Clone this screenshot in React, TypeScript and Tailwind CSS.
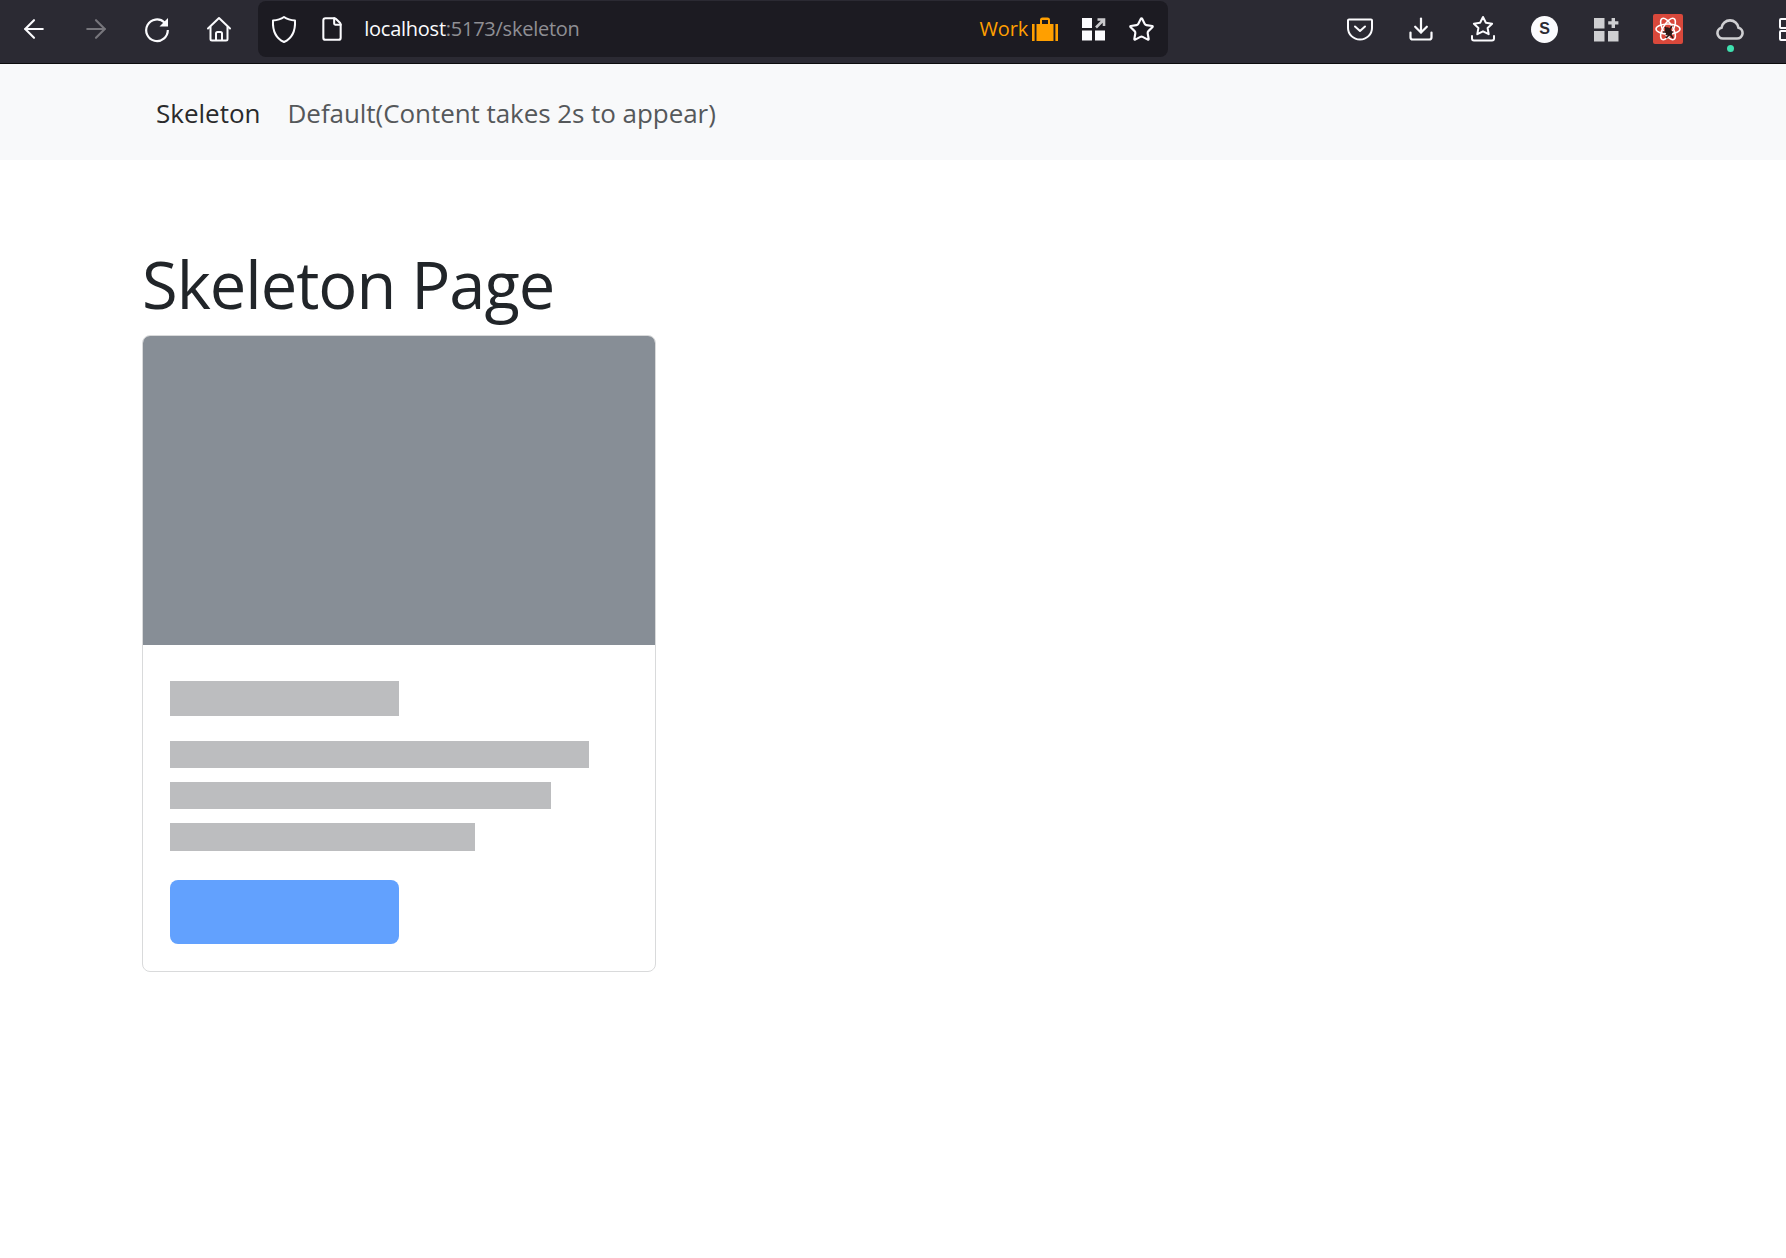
import React from 'react';
import { ArrowLeft, ArrowRight, File, Star, Download } from 'lucide-react';

const ToolButton = ({ children }: { children: React.ReactNode }) => (
    <div className="w-[61.7px] h-[58px] shrink-0 flex items-center justify-center">{children}</div>
);

const ReloadIcon = () => (
    <svg width="28" height="28" viewBox="0 0 28 28" fill="none" stroke="#fbfbfe" strokeWidth="2.200">
        <path d="M21.500 7.500A10.800 10.800 0 1 0 24.800 15" />
        <path d="M25 3v8.500h-8.500z" fill="#fbfbfe" stroke="none" />
    </svg>
);

const HomeIcon = () => (
    <svg width="28" height="28" viewBox="0 0 28 28" fill="none" stroke="#fbfbfe" strokeWidth="2" strokeLinecap="round" strokeLinejoin="round">
        <path d="M3 13.500L14 3l11 10.500" />
        <path d="M5.500 12v12a1.500 1.500 0 0 0 1.500 1.500h14a1.500 1.500 0 0 0 1.500-1.500V12" />
        <path d="M11 25v-6.500a1.500 1.500 0 0 1 1.500-1.500h3a1.500 1.500 0 0 1 1.500 1.500V25" />
    </svg>
);

const ShieldIcon = () => (
    <svg width="26" height="29" viewBox="0 0 26 29" fill="none" stroke="#fbfbfe" strokeWidth="2" strokeLinejoin="round">
        <path d="M13 2c3 2.200 6.500 3.300 11 3.500.5 10-2 17.500-11 21.500C4 23 1.500 15.500 2 5.500 6.500 5.300 10 4.200 13 2z" />
    </svg>
);

const PocketIcon = () => (
    <svg width="26" height="24" viewBox="0 0 26 24" fill="none" stroke="#fbfbfe" strokeWidth="2">
        <path d="M2 2.500h22a1 1 0 0 1 1 1V11a12 11.500 0 0 1-24 0V3.500a1 1 0 0 1 1-1z" />
        <path d="M8 9.500l5 4.500 5-4.500" strokeLinecap="round" strokeLinejoin="round" />
    </svg>
);

const StarTrayIcon = () => (
    <svg width="26" height="28" viewBox="0 0 26 28" fill="none" stroke="#fbfbfe" strokeWidth="2" strokeLinejoin="round" strokeLinecap="round">
        <path d="M13 2l2.900 5.800 6.200.9-4.500 4.300 1.100 6.200L13 16.300 7.300 19.200 8.400 13 3.900 8.700l6.200-.9z" />
        <path d="M2 21v2.500a2 2 0 0 0 2 2h18a2 2 0 0 0 2-2V21" />
    </svg>
);

const GridArrowIcon = () => (
    <svg width="24" height="24" viewBox="0 0 24 24">
        <rect x="0" y="1" width="10" height="10" fill="#fbfbfe" />
        <rect x="0" y="13.500" width="10" height="10" fill="#fbfbfe" />
        <rect x="13" y="13.500" width="10" height="10" fill="#fbfbfe" />
        <path d="M14 10.500l7-7M15.500 2.500h6.500V9" stroke="#c9c9cc" strokeWidth="2.600" fill="none" />
    </svg>
);

const GridPlusIcon = () => (
    <svg width="25" height="25" viewBox="0 0 25 25" fill="#cfcfd2">
        <rect x="0" y="1" width="10.500" height="10.500" />
        <rect x="0" y="14" width="10.500" height="10.500" />
        <rect x="14" y="14" width="10.500" height="10.500" />
        <path d="M17.600 1H21v3.200h3.400v3.400H21V11h-3.400V7.600h-3.400V4.200h3.400z" />
    </svg>
);

const OverflowIcon = () => (
    <svg width="25" height="25" viewBox="0 0 25 25" fill="none" stroke="#fbfbfe" strokeWidth="2">
        <rect x="1" y="2" width="9" height="9" rx="1" />
        <rect x="1" y="14" width="9" height="9" rx="1" />
        <rect x="14" y="2" width="9" height="9" rx="1" />
        <rect x="14" y="14" width="9" height="9" rx="1" />
    </svg>
);

const BriefcaseIcon = () => (
    <svg width="26" height="24" viewBox="0 0 26 24" fill="#ff9f00">
        <path d="M0 7h2.600v17H0zM23.400 7H26v17h-2.600zM4.500 7H8V3a2.500 2.500 0 0 1 2.500-2.500h5A2.500 2.500 0 0 1 18 3v4h3.500v17h-17zM10 3v4h6V3z" fillRule="evenodd" />
    </svg>
);

const ReactBugIcon = () => (
    <svg width="30" height="30" viewBox="0 0 30 30">
        <rect width="30" height="30" rx="2" fill="#d9483b" />
        <g fill="none" stroke="#fff" strokeWidth="1.500">
            <ellipse cx="15" cy="15" rx="12" ry="5" />
            <ellipse cx="15" cy="15" rx="12" ry="5" transform="rotate(60 15 15)" />
            <ellipse cx="15" cy="15" rx="12" ry="5" transform="rotate(120 15 15)" />
        </g>
        <g stroke="#2b1a18" strokeWidth="1.600" fill="none">
            <path d="M12 13l6 8M19 12l-6 9M10 18h10M13 24l4-4M20 24l-3-4" />
        </g>
        <ellipse cx="15.500" cy="17.500" rx="3" ry="4.500" fill="#2b1a18" transform="rotate(-30 15.500 17.500)" />
    </svg>
);

const CloudIcon = () => (
    <div className="relative w-[28px] h-[24px]">
        <svg width="28" height="24" viewBox="0 0 28 24" fill="none" stroke="#cfcfd2" strokeWidth="2.600">
            <path d="M7 21.500h14a5.500 5.500 0 0 0 1.500-10.800A8.600 8.600 0 0 0 5.500 10.700 5.500 5.500 0 0 0 7 21.500z" />
        </svg>
        <span className="absolute left-[11px] top-[28px] w-[7px] h-[7px] rounded-full bg-[#3fe1b0]" />
    </div>
);

const Toolbar = () => (
    <div className="h-[64px] bg-[#2b2a33] border-b border-[#0c0c0d] flex items-start overflow-hidden pl-[3px]">
        <ToolButton><ArrowLeft size={30} strokeWidth={1.7} color="#fbfbfe" /></ToolButton>
        <ToolButton><ArrowRight size={30} strokeWidth={1.7} color="#77767c" /></ToolButton>
        <ToolButton><ReloadIcon /></ToolButton>
        <ToolButton><HomeIcon /></ToolButton>

        {/* url bar */}
        <div className="ml-[8.5px] w-[910px] h-[56px] mt-[1px] shrink-0 rounded-lg bg-[#1c1b22] flex items-center font-['Open_Sans',sans-serif] text-[20px]">
            <div className="w-[26px] ml-[13px] flex justify-center"><ShieldIcon /></div>
            <div className="w-[26px] ml-[22px] flex justify-center">
                <File size={26} strokeWidth={1.9} color="#fbfbfe" />
            </div>
            <div className="ml-[19px] tracking-[-0.25px]">
                <span className="text-[#fbfbfe]">localhost</span>
                <span className="text-[#8f8f94]">:5173/skeleton</span>
            </div>
            <div className="ml-auto flex items-center text-[#ff9f00]">
                <span className="tracking-[-0.1px]">Work</span>
                <div className="ml-[4px]"><BriefcaseIcon /></div>
            </div>
            <div className="ml-[24px]"><GridArrowIcon /></div>
            <div className="ml-[22px] mr-[13px]"><Star size={27} strokeWidth={1.9} color="#fbfbfe" /></div>
        </div>

        {/* right side */}
        <div className="ml-[160.5px] flex shrink-0">
            <ToolButton><PocketIcon /></ToolButton>
            <ToolButton><Download size={28} strokeWidth={1.9} color="#fbfbfe" /></ToolButton>
            <ToolButton><StarTrayIcon /></ToolButton>
            <ToolButton>
                <div className="w-[27px] h-[27px] rounded-full bg-[#fbfbfe] text-[#2b2a33] flex items-center justify-center font-['Liberation_Sans',sans-serif] font-bold text-[16px]">S</div>
            </ToolButton>
            <ToolButton><GridPlusIcon /></ToolButton>
            <ToolButton><ReactBugIcon /></ToolButton>
            <ToolButton><CloudIcon /></ToolButton>
            <ToolButton><OverflowIcon /></ToolButton>
        </div>
    </div>
);

export default function App() {
    return (
        <div className="min-h-[1258px] bg-white font-['Open_Sans',sans-serif]">
            <Toolbar />

            <nav className="h-[96px] bg-[#f8f9fa] flex items-center pl-[156px] pt-[3px]">
                <span className="text-[26px] text-[#2a2b2c]">Skeleton</span>
                <span className="ml-[27px] text-[26px] text-[#55585a] tracking-[-0.06px]">Default(Content takes 2s to appear)</span>
            </nav>

            <main className="pl-[142px] pt-[85px]">
                <h1 className="text-[65px] leading-[78px] text-[#212529] tracking-[-1px] font-normal h-[90px]">Skeleton Page</h1>

                <div className="w-[514px] h-[637px] rounded-[8px] border border-[#d9dadb] overflow-hidden bg-white">
                    <div className="h-[309px] bg-[#878e96]" />
                    <div className="pl-[27px] pt-[36px]">
                        <div className="w-[229px] h-[35px] bg-[#bcbdbf]" />
                        <div className="w-[419px] h-[27px] mt-[25px] bg-[#bcbdbf]" />
                        <div className="w-[381px] h-[27px] mt-[14px] bg-[#bcbdbf]" />
                        <div className="w-[305px] h-[28px] mt-[14px] bg-[#bcbdbf]" />
                        <div className="w-[229px] h-[64px] mt-[29px] rounded-[8px] bg-[#62a1fe]" />
                    </div>
                </div>
            </main>
        </div>
    );
}
